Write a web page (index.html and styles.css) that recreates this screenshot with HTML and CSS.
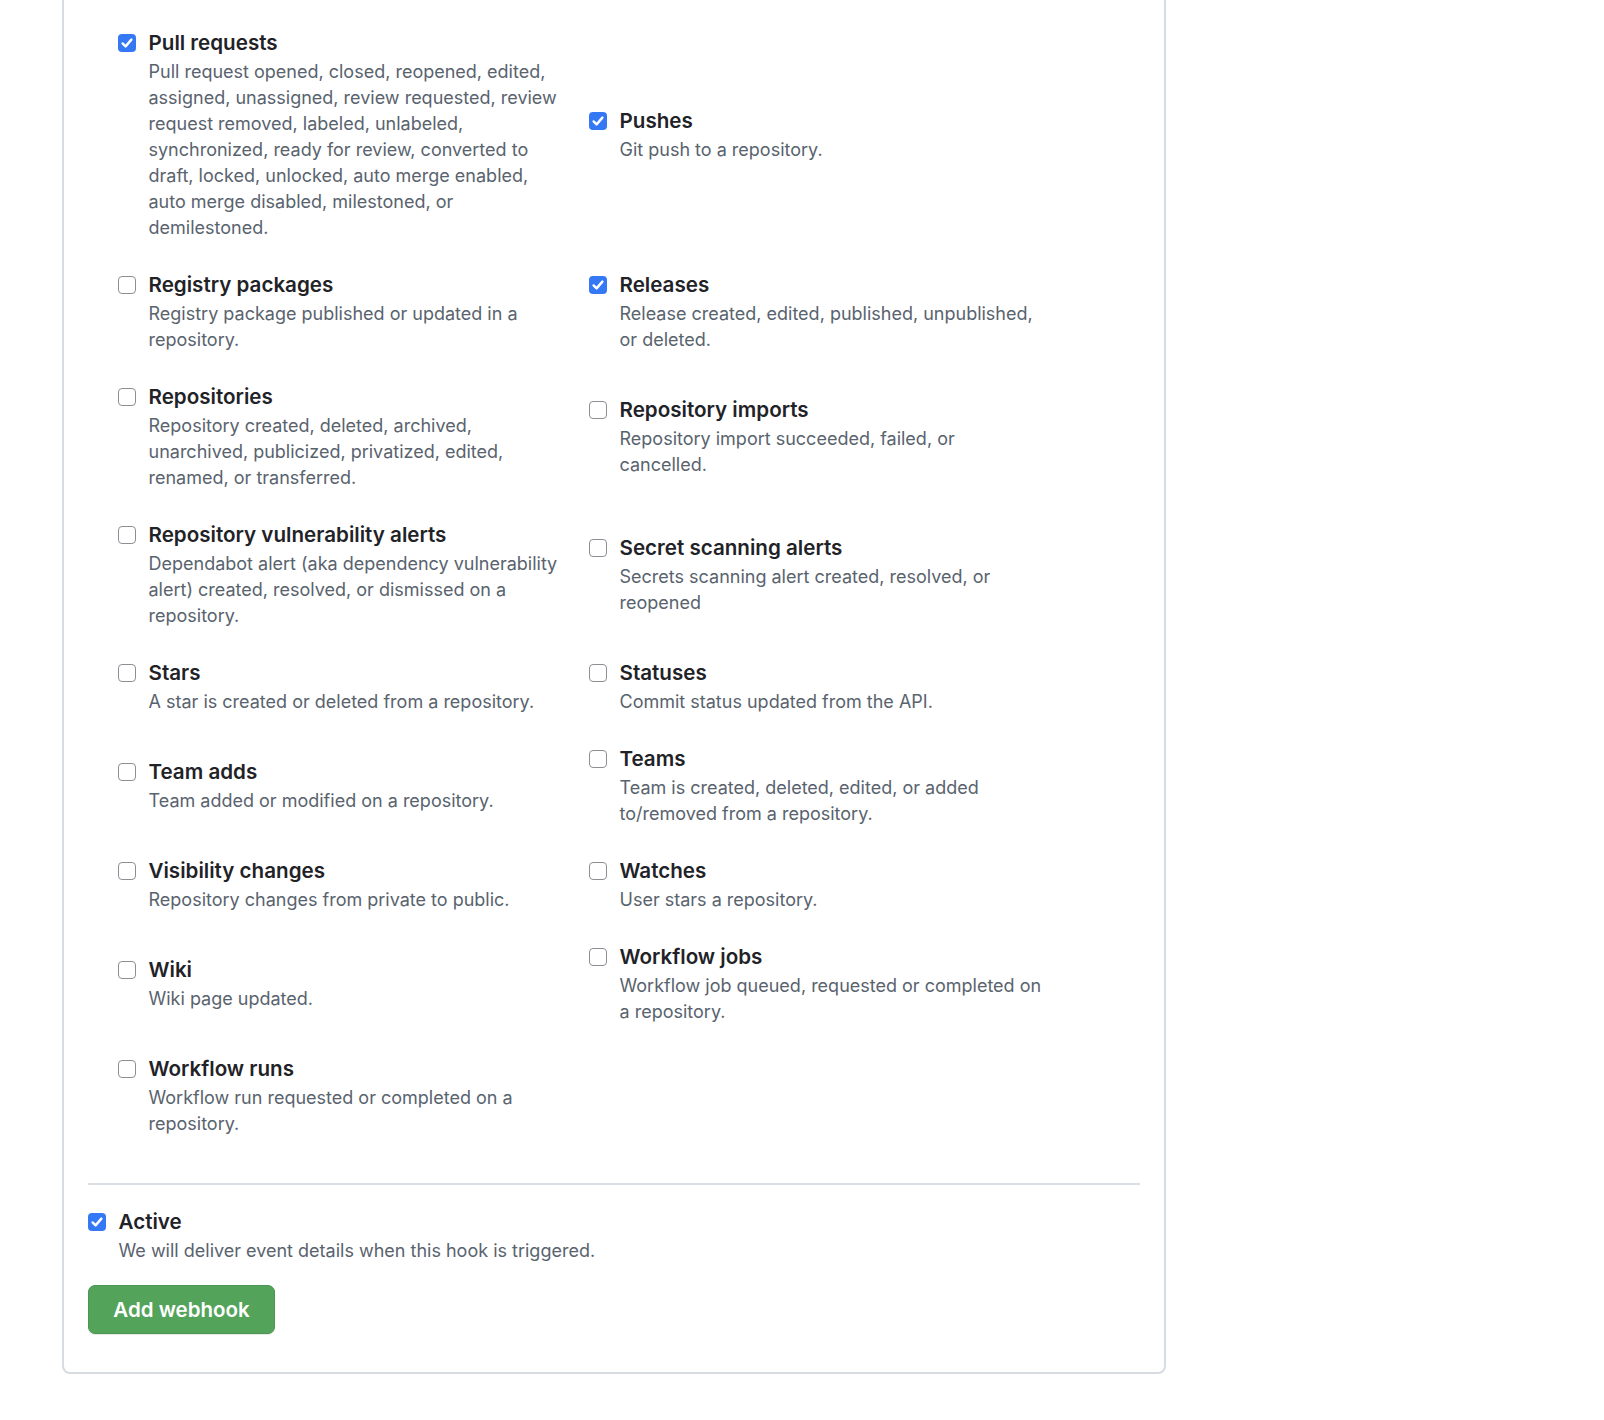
FILE: index.html
```html
<!DOCTYPE html>
<html>
<head>
<meta charset="utf-8">
<title>Add webhook</title>
<link rel="stylesheet" href="styles.css">
</head>
<body>
<form class="panel">
  <div class="events">
    <label class="event">
      <span class="check is-checked"><svg viewBox="0 0 18 18" width="18" height="18"><path d="M4.6 9.4 L7.6 12.4 L13.4 5.6" /></svg></span>
      <span class="event-text">
        <span class="event-title">Pull requests</span>
        <span class="event-desc">Pull request opened, closed, reopened, edited, assigned, unassigned, review requested, review request removed, labeled, unlabeled, synchronized, ready for review, converted to draft, locked, unlocked, auto merge enabled, auto merge disabled, milestoned, or demilestoned.</span>
      </span>
    </label>
    <label class="event">
      <span class="check is-checked"><svg viewBox="0 0 18 18" width="18" height="18"><path d="M4.6 9.4 L7.6 12.4 L13.4 5.6" /></svg></span>
      <span class="event-text">
        <span class="event-title">Pushes</span>
        <span class="event-desc">Git push to a repository.</span>
      </span>
    </label>

    <label class="event">
      <span class="check"></span>
      <span class="event-text">
        <span class="event-title">Registry packages</span>
        <span class="event-desc">Registry package published or updated in a repository.</span>
      </span>
    </label>
    <label class="event">
      <span class="check is-checked"><svg viewBox="0 0 18 18" width="18" height="18"><path d="M4.6 9.4 L7.6 12.4 L13.4 5.6" /></svg></span>
      <span class="event-text">
        <span class="event-title">Releases</span>
        <span class="event-desc">Release created, edited, published, unpublished, or deleted.</span>
      </span>
    </label>

    <label class="event">
      <span class="check"></span>
      <span class="event-text">
        <span class="event-title">Repositories</span>
        <span class="event-desc">Repository created, deleted, archived, unarchived, publicized, privatized, edited, renamed, or transferred.</span>
      </span>
    </label>
    <label class="event">
      <span class="check"></span>
      <span class="event-text">
        <span class="event-title">Repository imports</span>
        <span class="event-desc">Repository import succeeded, failed, or cancelled.</span>
      </span>
    </label>

    <label class="event">
      <span class="check"></span>
      <span class="event-text">
        <span class="event-title">Repository vulnerability alerts</span>
        <span class="event-desc">Dependabot alert (aka dependency vulnerability alert) created, resolved, or dismissed on a repository.</span>
      </span>
    </label>
    <label class="event">
      <span class="check"></span>
      <span class="event-text">
        <span class="event-title">Secret scanning alerts</span>
        <span class="event-desc">Secrets scanning alert created, resolved, or reopened</span>
      </span>
    </label>

    <label class="event">
      <span class="check"></span>
      <span class="event-text">
        <span class="event-title">Stars</span>
        <span class="event-desc">A star is created or deleted from a repository.</span>
      </span>
    </label>
    <label class="event">
      <span class="check"></span>
      <span class="event-text">
        <span class="event-title">Statuses</span>
        <span class="event-desc">Commit status updated from the API.</span>
      </span>
    </label>

    <label class="event">
      <span class="check"></span>
      <span class="event-text">
        <span class="event-title">Team adds</span>
        <span class="event-desc">Team added or modified on a repository.</span>
      </span>
    </label>
    <label class="event">
      <span class="check"></span>
      <span class="event-text">
        <span class="event-title">Teams</span>
        <span class="event-desc">Team is created, deleted, edited, or added to/removed from a repository.</span>
      </span>
    </label>

    <label class="event">
      <span class="check"></span>
      <span class="event-text">
        <span class="event-title">Visibility changes</span>
        <span class="event-desc">Repository changes from private to public.</span>
      </span>
    </label>
    <label class="event">
      <span class="check"></span>
      <span class="event-text">
        <span class="event-title">Watches</span>
        <span class="event-desc">User stars a repository.</span>
      </span>
    </label>

    <label class="event">
      <span class="check"></span>
      <span class="event-text">
        <span class="event-title">Wiki</span>
        <span class="event-desc">Wiki page updated.</span>
      </span>
    </label>
    <label class="event">
      <span class="check"></span>
      <span class="event-text">
        <span class="event-title">Workflow jobs</span>
        <span class="event-desc">Workflow job queued, requested or completed on a repository.</span>
      </span>
    </label>

    <label class="event">
      <span class="check"></span>
      <span class="event-text">
        <span class="event-title">Workflow runs</span>
        <span class="event-desc">Workflow run requested or completed on a repository.</span>
      </span>
    </label>
  </div>

  <hr class="divider">

  <label class="event option-active">
    <span class="check is-checked"><svg viewBox="0 0 18 18" width="18" height="18"><path d="M4.6 9.4 L7.6 12.4 L13.4 5.6" /></svg></span>
    <span class="event-text">
      <span class="event-title">Active</span>
      <span class="event-desc">We will deliver event details when this hook is triggered.</span>
    </span>
  </label>

  <button type="button" class="btn-primary">Add webhook</button>
</form>
</body>
</html>
```
FILE: styles.css
```css
html, body {
  margin: 0;
  padding: 0;
  background: #ffffff;
}

body {
  font-family: "Inter", "Noto Sans", sans-serif;
  color: #1f2328;
}

.panel {
  box-sizing: border-box;
  width: 1104px;
  margin: 0 0 0 62px;
  padding: 27px 24px 38px 24px;
  border: 2px solid #d6dce2;
  border-top: none;
  border-radius: 0 0 8px 8px;
  display: flex;
  flex-direction: column;
  align-items: flex-start;
}

.events {
  display: grid;
  grid-template-columns: 444.5px 452.5px;
  column-gap: 26.5px;
  row-gap: 28px;
  align-items: center;
  margin-left: 30px;
}

.event {
  display: flex;
  align-items: flex-start;
}

.check {
  flex: none;
  box-sizing: border-box;
  width: 18px;
  height: 18px;
  margin-top: 7px;
  margin-right: 12.5px;
  border: 1.5px solid #8b8f94;
  border-radius: 4px;
  background: #ffffff;
  display: flex;
  align-items: center;
  justify-content: center;
}

.check.is-checked {
  border: none;
  background: #3478f6;
}

.check svg {
  display: block;
}

.check svg path {
  fill: none;
  stroke: #ffffff;
  stroke-width: 2.4;
  stroke-linecap: round;
  stroke-linejoin: round;
}

.event-text {
  display: flex;
  flex-direction: column;
  min-width: 0;
}

.event-title {
  font-size: 20.6px;
  line-height: 32px;
  font-weight: 600;
  color: #1f2328;
}

.event-desc {
  font-size: 18px;
  line-height: 26px;
  font-weight: 400;
  color: #59636e;
}

.divider {
  align-self: stretch;
  height: 2px;
  margin: 46px 0 20.5px 0;
  border: none;
  background: #d8dee4;
}

.btn-primary {
  margin-top: 21.5px;
  box-sizing: border-box;
  width: 187px;
  height: 49px;
  padding: 0;
  border: 1px solid #4b9652;
  border-radius: 7px;
  background: #54a35b;
  color: #ffffff;
  font-family: "Inter", "Noto Sans", sans-serif;
  font-size: 20.5px;
  font-weight: 600;
  cursor: pointer;
  box-shadow: 0 1px 0 rgba(31, 35, 40, 0.1);
}
```
